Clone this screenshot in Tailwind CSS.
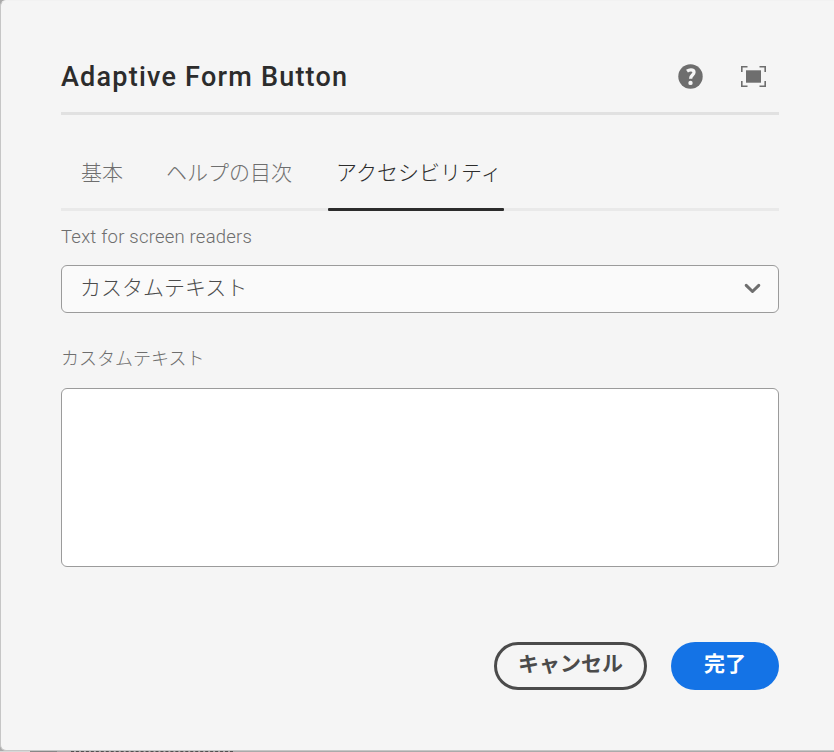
<!DOCTYPE html>
<html lang="ja">
<head>
<meta charset="utf-8">
<title>Adaptive Form Button</title>
<script src="https://cdn.jsdelivr.net/npm/@tailwindcss/browser@4"></script>
</head>
<body class="w-[834px] h-[752px] overflow-hidden bg-[#aaaaaa] font-['Roboto','Noto_Sans_CJK_JP',sans-serif]">
<div class="relative flex h-[752px] flex-col">
<main class="h-[751px] w-[840px] shrink-0 rounded-l-[6px] border border-[#c6c6c6] border-t-[#f2f2f2] bg-[#f5f5f5] pl-[60px]">
  <div class="flex w-[718px] flex-col">
    <header class="flex h-[114px] items-start border-b-[3px] border-[#e1e1e1] pt-[60px]">
      <h1 class="grow whitespace-nowrap text-[27px] leading-[32px] font-medium tracking-[1.22px] text-[#2c2c2c]">Adaptive Form Button</h1>
      <button class="mr-[38px] mt-[3px]" aria-label="ヘルプ">
        <svg class="block" width="25" height="25" viewBox="0 0 25 25"><circle cx="12.5" cy="12.5" r="12.2" fill="#6e6e6e"/><path d="M9 7.2C10.4 6.2 11.5 5.8 12.9 5.8C15 5.8 16 6.8 16 8.3C16 11.1 12.6 11 12.6 14.7" fill="none" stroke="#f5f5f5" stroke-width="3.3"/><circle cx="12.5" cy="18.9" r="2.2" fill="#f5f5f5"/></svg>
      </button>
      <button class="mr-[13px] mt-[5px]" aria-label="全画面表示">
        <svg class="block" width="25" height="21" viewBox="0 0 25 21"><path d="M.8 6V.8H6.5M18.5.8H24.2V6M24.2 15V20.2H18.5M6.5 20.2H.8V15" fill="none" stroke="#6e6e6e" stroke-width="1.6"/><path d="M5 4.3H20V16.7H5Z" fill="#6e6e6e"/></svg>
      </button>
    </header>
    <nav class="flex h-[96px] items-end border-b-[3px] border-[#e9e9e9] text-[21px] font-light text-[#6e6e6e]">
      <a class="h-[55px] w-[86px] pl-[20px] leading-[40px] whitespace-nowrap">基本</a>
      <a class="h-[55px] w-[181px] pl-[19px] leading-[40px] whitespace-nowrap">ヘルプの目次</a>
      <a class="relative h-[55px] w-[176px] pl-[8px] leading-[40px] whitespace-nowrap text-[#2c2c2c]">アクセシビリティ<span class="absolute left-0 -bottom-[3px] h-[3px] w-[176px] rounded-[1px] bg-[#2c2c2c]"></span></a>
    </nav>
    <label class="mt-[13px] h-[41px] whitespace-nowrap text-[18.5px] leading-[26px] font-light tracking-[0.21px] text-[#6e6e6e]">Text for screen readers</label>
    <div class="flex h-[48px] items-center justify-between rounded-[6px] border border-[#9b9b9b] bg-[#fafafa] pl-[18px] pr-[17px]">
      <span class="text-[21px] leading-[40px] font-light text-[#4b4b4b] -mt-[3px]">カスタムテキスト</span>
      <svg class="-mt-[2px]" width="17" height="11" viewBox="0 0 17 11"><path d="M2.2 2.4L8.5 8.5L14.8 2.4" fill="none" stroke="#6e6e6e" stroke-width="3" stroke-linecap="round" stroke-linejoin="round"/></svg>
    </div>
    <label class="mt-[33px] h-[42px] whitespace-nowrap text-[18px] leading-[26px] font-light text-[#6e6e6e]">カスタムテキスト</label>
    <textarea class="block h-[179px] w-full resize-none rounded-[6px] border border-[#9b9b9b] bg-white"></textarea>
    <footer class="mt-[75px] flex justify-end gap-[24px] text-[21px] font-bold">
      <button class="h-[48px] w-[153px] rounded-full border-[3px] border-[#4b4b4b] pb-[5px] leading-[36px] text-[#4b4b4b]">キャンセル</button>
      <button class="h-[48px] w-[108px] rounded-full bg-[#1473e6] pb-[5px] leading-[42px] text-white">完了</button>
    </footer>
  </div>
</main>
<div class="flex h-px w-full bg-[#aaaaaa]"><span class="w-[30px] bg-[#d8d8d8]"></span><span class="w-[27px] bg-[#888888]"></span><span class="ml-[14px] w-[162px] border-t border-dashed border-[#505050]"></span></div>
</div>
</body>
</html>
